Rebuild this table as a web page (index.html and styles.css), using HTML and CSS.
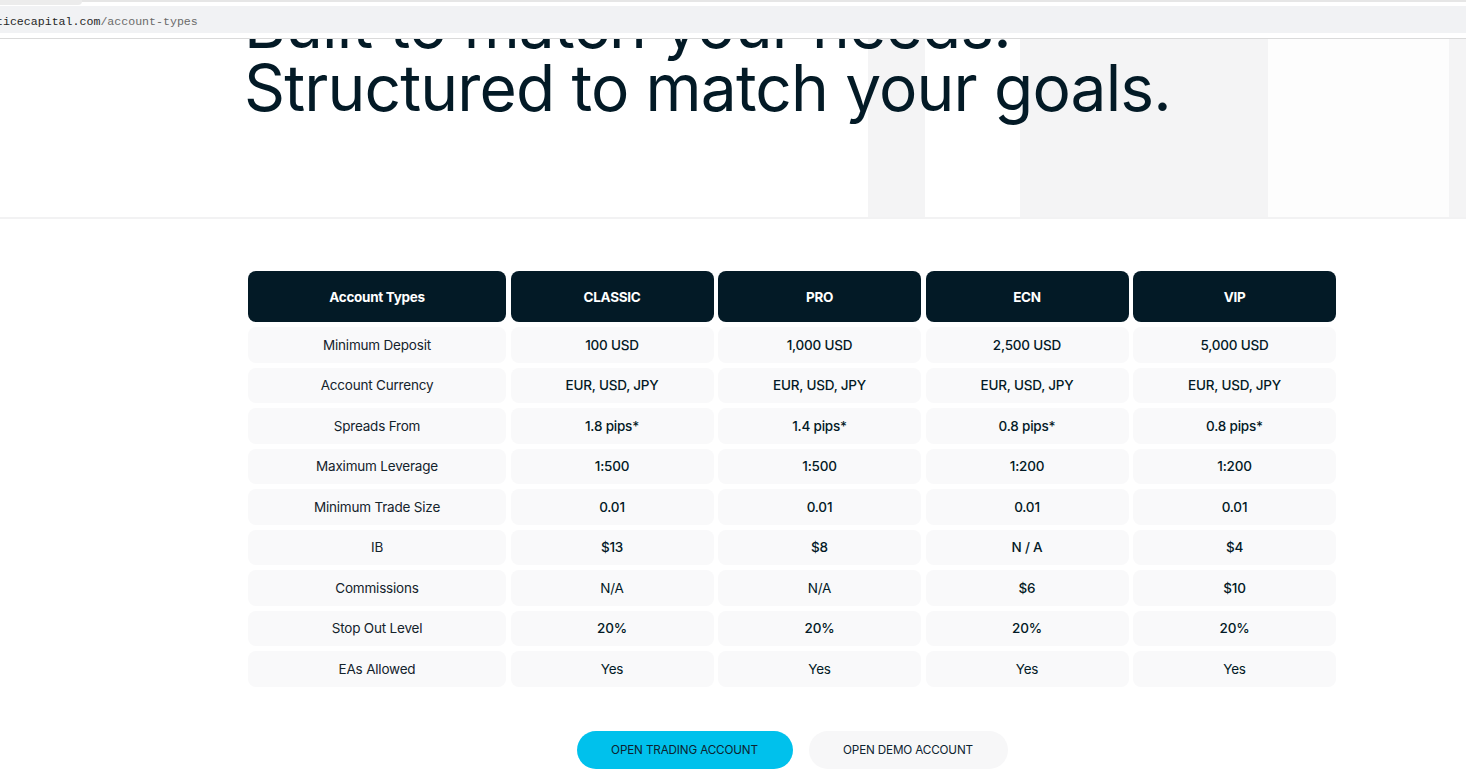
FILE: index.html
```html
<!DOCTYPE html>
<html lang="en">
<head>
<meta charset="utf-8">
<title>Account Types</title>
<link rel="stylesheet" href="styles.css">
</head>
<body>
<div class="chrome">
  <div class="chrome-top"><span class="chrome-tab"></span></div>
  <div class="urlbar"><span class="url-host">ticecapital.com</span><span class="url-path">/account-types</span></div>
  <div class="chrome-gap"></div>
</div>

<section class="hero">
  <div class="container">
    <h1 class="hero-title">Built to match your needs.<br>Structured to match your goals.</h1>
  </div>
</section>

<section class="accounts">
  <div class="container">
    <div class="grid">
      <div class="head">Account Types</div>
      <div class="head">CLASSIC</div>
      <div class="head">PRO</div>
      <div class="head">ECN</div>
      <div class="head">VIP</div>

      <div class="cell label">Minimum Deposit</div>
      <div class="cell val">100 USD</div>
      <div class="cell val">1,000 USD</div>
      <div class="cell val">2,500 USD</div>
      <div class="cell val">5,000 USD</div>

      <div class="cell label">Account Currency</div>
      <div class="cell val">EUR, USD, JPY</div>
      <div class="cell val">EUR, USD, JPY</div>
      <div class="cell val">EUR, USD, JPY</div>
      <div class="cell val">EUR, USD, JPY</div>

      <div class="cell label">Spreads From</div>
      <div class="cell val">1.8 pips*</div>
      <div class="cell val">1.4 pips*</div>
      <div class="cell val">0.8 pips*</div>
      <div class="cell val">0.8 pips*</div>

      <div class="cell label">Maximum Leverage</div>
      <div class="cell val">1:500</div>
      <div class="cell val">1:500</div>
      <div class="cell val">1:200</div>
      <div class="cell val">1:200</div>

      <div class="cell label">Minimum Trade Size</div>
      <div class="cell val">0.01</div>
      <div class="cell val">0.01</div>
      <div class="cell val">0.01</div>
      <div class="cell val">0.01</div>

      <div class="cell label">IB</div>
      <div class="cell val">$13</div>
      <div class="cell val">$8</div>
      <div class="cell val">N / A</div>
      <div class="cell val">$4</div>

      <div class="cell label">Commissions</div>
      <div class="cell val light">N/A</div>
      <div class="cell val light">N/A</div>
      <div class="cell val">$6</div>
      <div class="cell val">$10</div>

      <div class="cell label">Stop Out Level</div>
      <div class="cell val">20%</div>
      <div class="cell val">20%</div>
      <div class="cell val">20%</div>
      <div class="cell val">20%</div>

      <div class="cell label">EAs Allowed</div>
      <div class="cell val light">Yes</div>
      <div class="cell val light">Yes</div>
      <div class="cell val light">Yes</div>
      <div class="cell val light">Yes</div>
    </div>

    <div class="actions">
      <a class="btn btn-primary" href="#">OPEN TRADING ACCOUNT</a>
      <a class="btn btn-ghost" href="#">OPEN DEMO ACCOUNT</a>
    </div>
  </div>
</section>
</body>
</html>
```

FILE: styles.css
```css
* { box-sizing: border-box; }
html, body { margin: 0; padding: 0; background: #ffffff; overflow: hidden; }
body { font-family: Inter, "Noto Sans", sans-serif; color: #031a26; }

/* browser chrome strip */
.chrome-top {
  height: 6px;
  border-top: 2px solid #e6e6e6;
  position: relative;
}
.chrome-tab {
  position: absolute;
  left: 0; top: -2px;
  width: 82px; height: 5px;
  background: #ececec;
  border-bottom-right-radius: 4px;
}
.urlbar {
  height: 27px;
  padding-top: 2px;
  background: #f1f2f4;
  font-family: "Liberation Mono", monospace;
  font-size: 11.6px;
  line-height: 27px;
  white-space: nowrap;
  margin-left: -4px;
}
.url-host { color: #262626; }
.url-path { color: #6a6a6a; }
.chrome-gap {
  height: 6px;
  border-bottom: 1px solid #dadada;
}

.container {
  width: 1088px;
  margin-left: 248px;
}

/* hero */
.hero {
  height: 180px;
  overflow: hidden;
  border-bottom: 2px solid #f2f2f3;
  background: linear-gradient(to right,
    #ffffff 0, #ffffff 868px,
    #f4f4f5 868px, #f4f4f5 925px,
    #ffffff 925px, #ffffff 1020px,
    #f4f4f5 1020px, #f4f4f5 1268px,
    #fdfdfd 1268px, #fdfdfd 1449px,
    #f4f4f5 1449px);
}
.hero-title {
  margin: -46px 0 0 -4px;
  font-size: 64px;
  line-height: 63px;
  font-weight: 400;
  color: #031a26;
  letter-spacing: -0.85px;
  white-space: nowrap;
}

/* table */
.accounts { padding-top: 52px; }
.grid {
  display: grid;
  grid-template-columns: 258px repeat(4, 203px);
  grid-template-rows: 51px repeat(9, 35.5px);
  column-gap: 4.5px;
  row-gap: 5px;
}
.head {
  background: #031a26;
  color: #ffffff;
  border-radius: 8px;
  display: flex;
  align-items: center;
  justify-content: center;
  font-size: 13.5px;
  font-weight: 700;
  letter-spacing: -0.3px;
}
.cell {
  background: #f9f9fa;
  border-radius: 8px;
  display: flex;
  align-items: center;
  justify-content: center;
  font-size: 13.5px;
  color: #14232c;
  letter-spacing: -0.2px;
}
.label { font-weight: 400; }
.val { font-weight: 500; color: #031a26; }
.val.light { font-weight: 400; }

/* buttons */
.actions {
  display: flex;
  justify-content: center;
  gap: 16px;
  margin-top: 44.5px;
}
.btn {
  height: 38px;
  border-radius: 19px;
  display: inline-flex;
  align-items: center;
  justify-content: center;
  font-size: 11.7px;
  font-weight: 400;
  color: #0d2330;
  text-decoration: none;
  letter-spacing: -0.15px;
}
.btn-primary { width: 216px; background: #00c1ec; }
.btn-ghost { width: 199px; background: #f7f7f8; }
```
